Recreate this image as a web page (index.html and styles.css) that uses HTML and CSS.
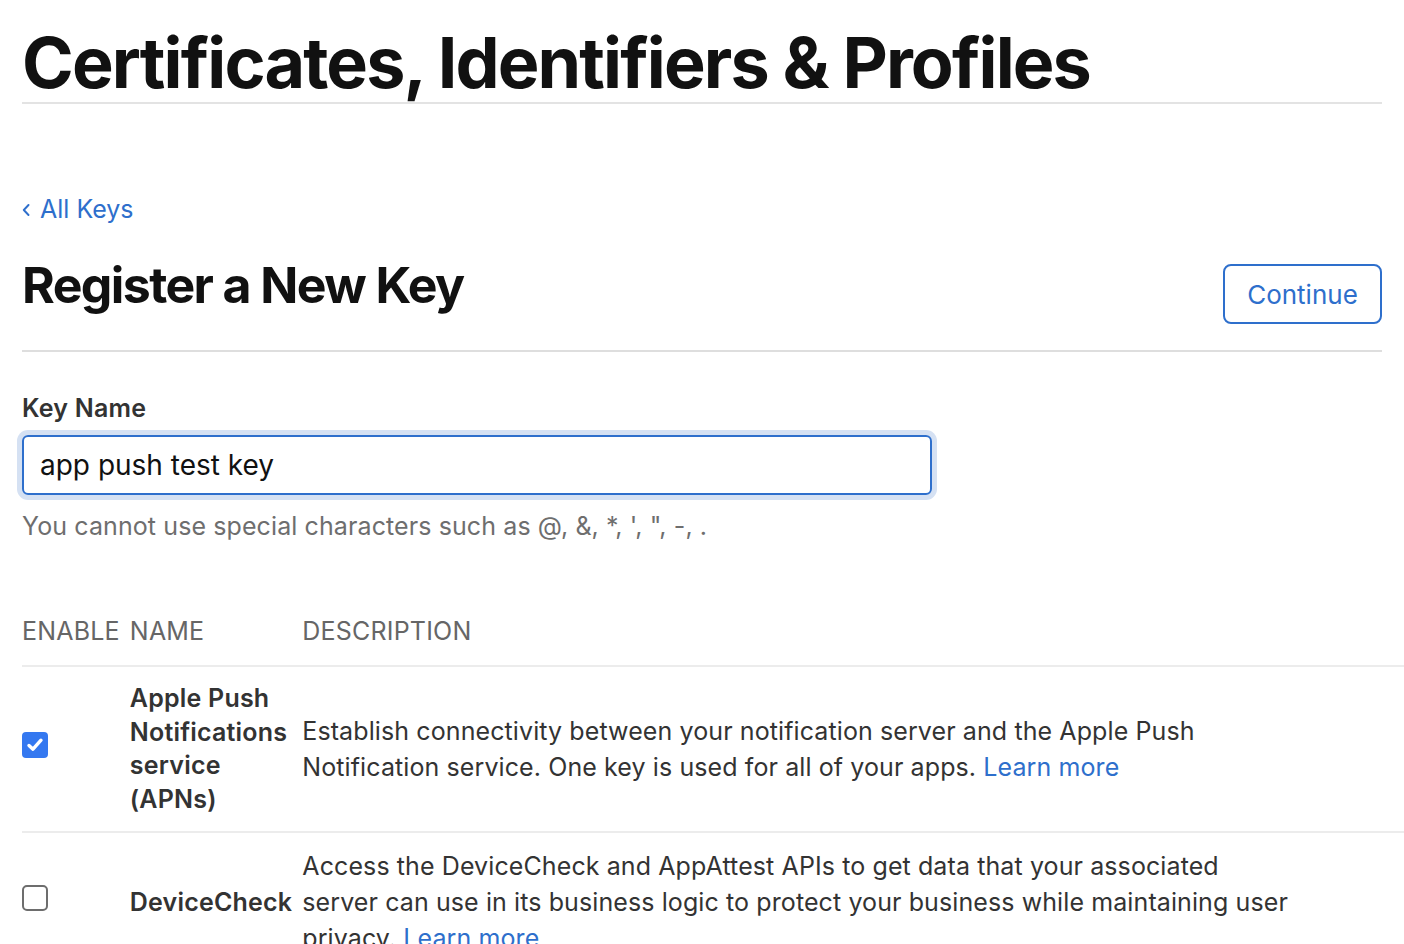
FILE: index.html
```html
<!DOCTYPE html>
<html lang="en">
<head>
<meta charset="utf-8">
<title>Register a New Key</title>
<link rel="stylesheet" href="styles.css">
</head>
<body>
<div class="page">
  <header class="page-header">
    <h1 class="page-title">Certificates, Identifiers &amp; Profiles</h1>
  </header>

  <a class="back-link" href="#"><svg class="chev" width="8" height="12" viewBox="0 0 8 12"><path d="M6.5 1 L1.8 6 L6.5 11" fill="none" stroke="currentColor" stroke-width="1.9" stroke-linecap="round" stroke-linejoin="round"/></svg><span>All Keys</span></a>

  <div class="title-row">
    <h2 class="section-title">Register a New Key</h2>
    <button class="btn-continue" type="button">Continue</button>
  </div>

  <form class="key-form">
    <label class="field-label" for="keyname">Key Name</label>
    <div class="input-ring"><input id="keyname" class="text-input" type="text" value="app push test key"></div>
    <p class="hint">You cannot use special characters such as @, &amp;, *, ', ", -, .</p>
  </form>

  <div class="table-wrap">
    <table class="services">
      <thead>
        <tr>
          <th class="col-enable">ENABLE</th>
          <th class="col-name">NAME</th>
          <th class="col-desc">DESCRIPTION</th>
        </tr>
      </thead>
      <tbody>
        <tr>
          <td class="col-enable"><span class="checkbox checked"><svg width="20" height="20" viewBox="0 0 20 20"><path d="M4 10.5 L8 14.2 L16 5.2" fill="none" stroke="#fff" stroke-width="3.4" stroke-linecap="round" stroke-linejoin="round"/></svg></span></td>
          <td class="col-name">Apple Push Notifications service (APNs)</td>
          <td class="col-desc"><p class="desc">Establish connectivity between your notification server and the Apple Push Notification service. One key is used for all of your apps. <a href="#">Learn more</a></p></td>
        </tr>
        <tr>
          <td class="col-enable"><span class="checkbox"></span></td>
          <td class="col-name">DeviceCheck</td>
          <td class="col-desc"><p class="desc">Access the DeviceCheck and AppAttest APIs to get data that your associated server can use in its business logic to protect your business while maintaining user privacy. <a href="#">Learn more</a></p></td>
        </tr>
      </tbody>
    </table>
  </div>
</div>
</body>
</html>
```

FILE: styles.css
```css
* { box-sizing: border-box; }

html, body {
  margin: 0;
  padding: 0;
  background: #fff;
}

body {
  font-family: Inter, "Noto Sans", "Liberation Sans", sans-serif;
  color: #333;
  overflow: hidden;
}

.page {
  padding: 0 22px;
}

.page-header {
  padding-top: 28px;
  padding-bottom: 4px;
  border-bottom: 2px solid #e3e3e3;
}

.page-title {
  margin: 0;
  font-size: 70px;
  line-height: 70px;
  font-weight: 700;
  color: #111;
  letter-spacing: -1.85px;
}

.back-link {
  margin-top: 87px;
  display: inline-flex;
  align-items: center;
  gap: 10px;
  height: 36px;
  color: #2e6fcc;
  text-decoration: none;
  font-size: 25px;
  line-height: 36px;
}

.chev {
  display: block;
  margin-top: 1px;
}

.title-row {
  margin-top: 28px;
  display: flex;
  justify-content: space-between;
  align-items: flex-start;
  padding-bottom: 26px;
  border-bottom: 2px solid #dedede;
}

.section-title {
  margin: 0;
  font-size: 50px;
  line-height: 60px;
  font-weight: 700;
  color: #111;
  letter-spacing: -1.6px;
}

.btn-continue {
  margin-top: 9px;
  width: 159px;
  height: 60px;
  border: 2px solid #2e6fcc;
  border-radius: 8px;
  background: #fff;
  color: #2e6fcc;
  font-family: inherit;
  font-size: 26px;
  padding: 0;
  cursor: pointer;
}

.key-form {
  margin: 0;
  padding-top: 38px;
}

.field-label {
  display: block;
  font-size: 25px;
  line-height: 36px;
  font-weight: 600;
  letter-spacing: 0.2px;
  color: #333;
}

.input-ring {
  margin-top: 9px;
  width: 910px;
  border-radius: 6px;
  box-shadow: 0 0 0 5px #d5e1f3;
}

.text-input {
  display: block;
  width: 910px;
  height: 60px;
  border: 2px solid #2e6fcc;
  border-radius: 6px;
  padding: 0 16px;
  font-family: inherit;
  font-size: 28px;
  color: #111;
  background: #fff;
  outline: none;
}

.hint {
  margin: 13px 0 0;
  font-size: 25px;
  line-height: 36px;
  letter-spacing: 0.1px;
  color: #6e6e6e;
}

.table-wrap {
  margin-top: 54px;
  margin-right: -22px;
}

.services {
  width: 100%;
  border-collapse: collapse;
}

.services th {
  text-align: left;
  font-weight: 400;
  font-size: 25px;
  line-height: 36px;
  letter-spacing: 0.2px;
  color: #666;
  padding: 15px 10px 16px 0;
  border-bottom: 2px solid #ececec;
  white-space: nowrap;
}

.services td {
  padding: 15px 10px 15px 0;
  vertical-align: middle;
  font-size: 25px;
  border-bottom: 2px solid #ececec;
}

.services td.col-enable {
  width: 1%;
}

.services td.col-name {
  width: 1%;
  font-weight: 600;
  line-height: 33.6px;
  letter-spacing: 0.2px;
  color: #333;
}

.desc {
  margin: 0;
  max-width: 992px;
  line-height: 36px;
  letter-spacing: 0.1px;
  color: #333;
}

.desc a {
  color: #2e6fcc;
  text-decoration: none;
}

.checkbox {
  display: flex;
  align-items: center;
  justify-content: center;
  width: 26px;
  height: 26px;
  margin-bottom: 8px;
  border: 2px solid #6d6d6d;
  border-radius: 5px;
  background: #fff;
}

.checkbox.checked {
  border: none;
  background: #3478f0;
  border-radius: 4px;
}
```
